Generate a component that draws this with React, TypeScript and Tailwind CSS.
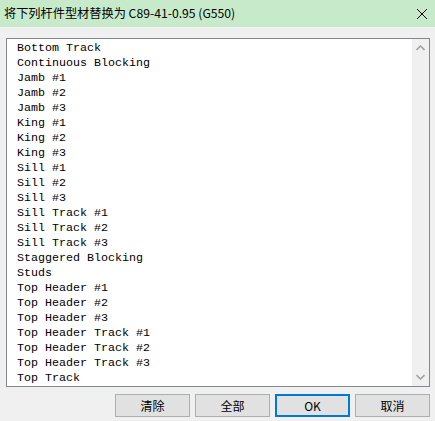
import React from "react";

const items = [
  "Bottom Track",
  "Continuous Blocking",
  "Jamb #1",
  "Jamb #2",
  "Jamb #3",
  "King #1",
  "King #2",
  "King #3",
  "Sill #1",
  "Sill #2",
  "Sill #3",
  "Sill Track #1",
  "Sill Track #2",
  "Sill Track #3",
  "Staggered Blocking",
  "Studs",
  "Top Header #1",
  "Top Header #2",
  "Top Header #3",
  "Top Header Track #1",
  "Top Header Track #2",
  "Top Header Track #3",
  "Top Track",
];

const cjk = { fontFamily: '"Microsoft YaHei", "Noto Sans CJK SC", "Noto Sans", sans-serif' };

function Btn({ label, primary }: { label: string; primary?: boolean }) {
  return (
    <div
      className={
        "w-[75px] h-[23px] flex items-center justify-center bg-[#e1e1e1] text-[12px] text-black " +
        (primary ? "border-2 border-[#0078d7]" : "border border-[#adadad]")
      }
      style={cjk}
    >
      {label}
    </div>
  );
}

export default function App() {
  return (
    <div className="w-[435px] h-[421px] bg-[#f0f0f0] flex flex-col overflow-hidden">
      <div className="h-[27px] bg-[#c7ebca] flex items-center justify-between pl-[4px] pr-[4px]">
        <span className="text-[12.2px] text-black leading-none" style={cjk}>
          将下列杆件型材替换为 C89-41-0.95 (G550)
        </span>
        <svg width="12" height="12" viewBox="0 0 12 12" className="mr-[3px]">
          <path d="M1 1 L11 11 M11 1 L1 11" stroke="#000" strokeWidth="1" />
        </svg>
      </div>
      <div className="mt-[11px] ml-[6px] w-[424px] h-[349px] border border-[#828790] bg-white flex">
        <div
          className="flex-1 pl-[10px] pt-[2px] text-[11.67px] leading-[15px] text-black whitespace-pre"
          style={{ fontFamily: '"Liberation Mono", "Courier New", monospace' }}
        >
          {items.map((t) => (
            <div key={t}>{t}</div>
          ))}
        </div>
        <div className="w-[17px] bg-[#f0f0f0] flex flex-col justify-between items-center py-[6px]">
          <svg width="9" height="6" viewBox="0 0 9 6">
            <path d="M0.5 5 L4.5 1 L8.5 5" fill="none" stroke="#a3a3a3" strokeWidth="1.6" />
          </svg>
          <svg width="9" height="6" viewBox="0 0 9 6">
            <path d="M0.5 1 L4.5 5 L8.5 1" fill="none" stroke="#a3a3a3" strokeWidth="1.6" />
          </svg>
        </div>
      </div>
      <div className="mt-[7px] flex justify-end gap-[5px] pr-[5px]">
        <Btn label="清除" />
        <Btn label="全部" />
        <Btn label="OK" primary />
        <Btn label="取消" />
      </div>
    </div>
  );
}
